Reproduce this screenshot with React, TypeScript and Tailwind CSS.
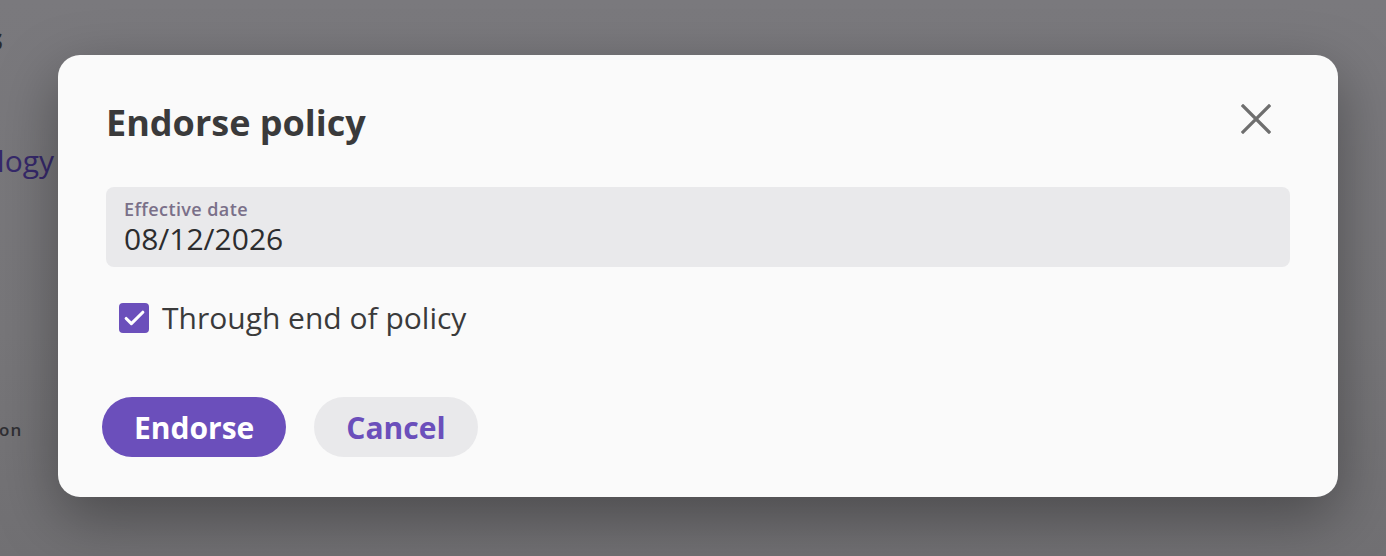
import { Check } from "lucide-react";

function CloseIcon() {
  return (
    <svg width="30" height="30" viewBox="0 0 30 30" fill="none" stroke="#6e6e6e" strokeWidth="3.2" strokeLinecap="square">
      <path d="M2 2 L28 28 M28 2 L2 28" />
    </svg>
  );
}

export default function App() {
  return (
    <div className="relative h-[556px] w-[1386px] overflow-hidden bg-[linear-gradient(180deg,#7a797d_0%,#777679_60%,#717073_100%)] font-['Open_Sans',sans-serif]">
      {/* dimmed page behind the overlay */}
      <span className="absolute left-[-12px] top-[24px] text-[30px] font-bold leading-none text-[#2a2a2c]">s</span>
      <span className="absolute right-[1332px] top-[146px] text-[30px] leading-none text-[#36296b]">Methodology</span>
      <span className="absolute left-[-1px] top-[421px] text-[17px] font-semibold leading-none tracking-[1px] text-[#2f2f33]">on</span>

      <div className="relative ml-[58px] mt-[55px] flex h-[442px] w-[1280px] flex-col rounded-[22px] bg-[#fafafa] px-12 shadow-[0_20px_60px_rgba(0,0,0,0.35)]">
        <div className="mt-[44px] flex items-center justify-between">
          <h2 className="text-[36px] font-bold leading-[48px] text-[#3a3a3b]">Endorse policy</h2>
          <button className="mr-[19px] mt-[-8px] flex h-[30px] w-[30px] items-center justify-center">
            <CloseIcon />
          </button>
        </div>

        <div className="mt-[40px] flex h-[80px] flex-col justify-center rounded-lg bg-[#e9e9eb] px-[18px] pt-[2px]">
          <span className="text-[18px] font-semibold leading-[22px] tracking-[0.4px] text-[#7a7089]">Effective date</span>
          <span className="text-[30px] leading-[38px] text-[#2c2c2e]">08/12/2026</span>
        </div>

        <label className="ml-[13px] mt-[32px] flex items-center gap-[13px]">
          <span className="flex h-[30px] w-[30px] items-center justify-center rounded-[4px] bg-[#6b4fbb]">
            <Check size={25} strokeWidth={3} color="#ffffff" />
          </span>
          <span className="text-[30px] leading-[38px] text-[#3a3a3b]">Through end of policy</span>
        </label>

        <div className="ml-[-4px] mt-[60px] flex gap-[28px]">
          <button className="h-[60px] rounded-full bg-[#6b4fbb] px-[32px] text-[30px] font-bold text-white">Endorse</button>
          <button className="h-[60px] rounded-full bg-[#e9e9eb] px-[32px] text-[30px] font-bold text-[#6b4fbb]">Cancel</button>
        </div>
      </div>
    </div>
  );
}
